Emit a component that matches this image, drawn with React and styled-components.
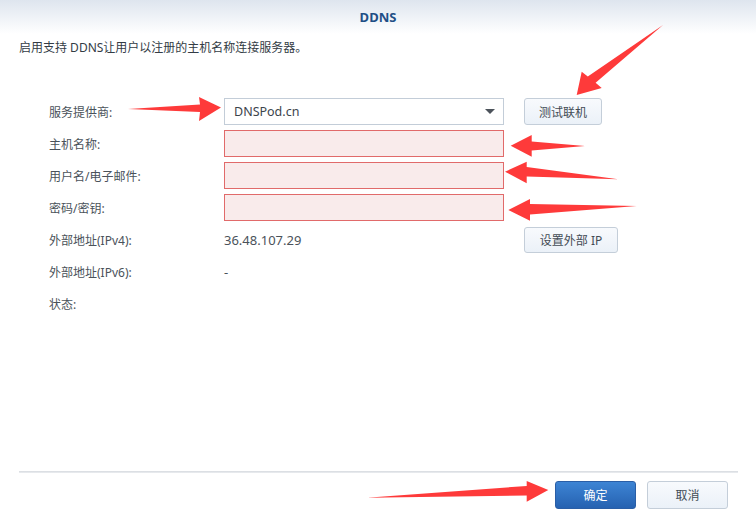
import React from "react";
import styled, { createGlobalStyle } from "styled-components";

const GlobalStyle = createGlobalStyle`
  html, body {
    margin: 0;
    padding: 0;
    background: #fff;
  }
  body {
    font-family: "Noto Sans", "Noto Sans CJK SC", sans-serif;
    color: #414b55;
  }
`;

const Dialog = styled.div`
  position: relative;
  width: 756px;
  height: 516px;
  display: flex;
  flex-direction: column;
  background: #fff;
  overflow: hidden;
`;

const Header = styled.div`
  height: 34px;
  line-height: 34px;
  text-align: center;
  font-size: 13px;
  font-weight: 700;
  color: #1f4f86;
  background: linear-gradient(#dee5ee, #ffffff);
`;

const Description = styled.p`
  margin: 0;
  padding: 4px 19px 0;
  line-height: 20px;
  font-size: 12px;
  color: #333c45;
`;

const Form = styled.div`
  display: grid;
  grid-template-columns: 155px 280px auto;
  grid-auto-rows: 27px;
  column-gap: 20px;
  row-gap: 5px;
  margin-top: 40px;
  padding-left: 49px;
  align-items: center;
`;

const Label = styled.div`
  font-size: 12px;
  color: #4a525a;
  grid-column: 1;
`;

const Value = styled.div`
  font-size: 13px;
  color: #4a525a;
  grid-column: 2;
`;

const Select = styled.div`
  grid-column: 2;
  height: 27px;
  box-sizing: border-box;
  border: 1px solid #c3cdd8;
  display: flex;
  align-items: center;
  justify-content: space-between;
  padding: 0 8px 0 9px;
  font-size: 12.5px;
  color: #3c444c;
  background: #fff;
`;

const Caret = styled.span`
  width: 0;
  height: 0;
  border-left: 5px solid transparent;
  border-right: 5px solid transparent;
  border-top: 5px solid #4c535b;
`;

const Input = styled.input`
  grid-column: 2;
  width: 280px;
  height: 27px;
  box-sizing: border-box;
  border: 1px solid #e16a6a;
  background: #f9ebeb;
  outline: none;
  margin: 0;
  padding: 0 8px;
`;

const Button = styled.button`
  height: ${(p) => p.$h || 27}px;
  box-sizing: border-box;
  padding: 0 ${(p) => p.$pad || 12}px;
  min-width: ${(p) => p.$w || 0}px;
  border-radius: 3px;
  font-family: inherit;
  font-size: 12px;
  cursor: pointer;
  border: 1px solid ${(p) => (p.$primary ? "#2a5ea6" : "#c4ced9")};
  color: ${(p) => (p.$primary ? "#fff" : "#434c55")};
  background: ${(p) =>
    p.$primary
      ? "linear-gradient(#3d84d4, #2662b1)"
      : "linear-gradient(#f8fafd, #ebf1f8)"};
`;

const SideButton = styled(Button)`
  grid-column: 3;
  justify-self: start;
`;

const Spacer = styled.div`
  flex: 1;
`;

const Divider = styled.div`
  margin: 0 18px 0 19px;
  height: 2px;
  background: linear-gradient(#d6dadf, #eceef1);
`;

const Footer = styled.div`
  display: flex;
  justify-content: flex-end;
  gap: 11px;
  padding: 8px 28px 7px 0;
`;

const Overlay = styled.svg`
  position: absolute;
  left: 0;
  top: 0;
  pointer-events: none;
`;

const arrows = [
  "128,109 200,104.5 199,97 221,107.5 199,121 200,112",
  "663,25 595.6,82.8 601.7,88 576.7,95 581.7,71.7 587.8,76.6",
  "585,146 531.7,141.5 531.7,135 510.7,145.7 531.7,156.7 531.7,150.5",
  "618.3,179.3 526.7,167 526.7,161.7 505,171.7 526.7,183.3 526.7,176.5",
  "636.7,206 530,204 530,199 508.3,210 530,220.7 530,214.5",
  "366.7,497.7 526.7,486 526.7,481 548.3,490 526.7,501.7 526.7,495.5",
];

export default function App() {
  return (
    <>
      <GlobalStyle />
      <Dialog>
        <Header>DDNS</Header>
        <Description>启用支持 DDNS让用户以注册的主机名称连接服务器。</Description>
        <Form>
          <Label>服务提供商:</Label>
          <Select>
            DNSPod.cn
            <Caret />
          </Select>
          <SideButton $w={78}>测试联机</SideButton>

          <Label>主机名称:</Label>
          <Input />

          <Label>用户名/电子邮件:</Label>
          <Input />

          <Label>密码/密钥:</Label>
          <Input type="password" />

          <Label>外部地址(IPv4):</Label>
          <Value>36.48.107.29</Value>
          <SideButton $h={26} $w={94}>设置外部 IP</SideButton>

          <Label>外部地址(IPv6):</Label>
          <Value>-</Value>

          <Label>状态:</Label>
        </Form>
        <Spacer />
        <Divider />
        <Footer>
          <Button $primary $h={28} $w={81}>确定</Button>
          <Button $h={28} $w={81}>取消</Button>
        </Footer>
        <Overlay width="756" height="516" viewBox="0 0 756 516">
          {arrows.map((pts, i) => (
            <polygon key={i} points={pts} fill="#fe3a3a" />
          ))}
        </Overlay>
      </Dialog>
    </>
  );
}
